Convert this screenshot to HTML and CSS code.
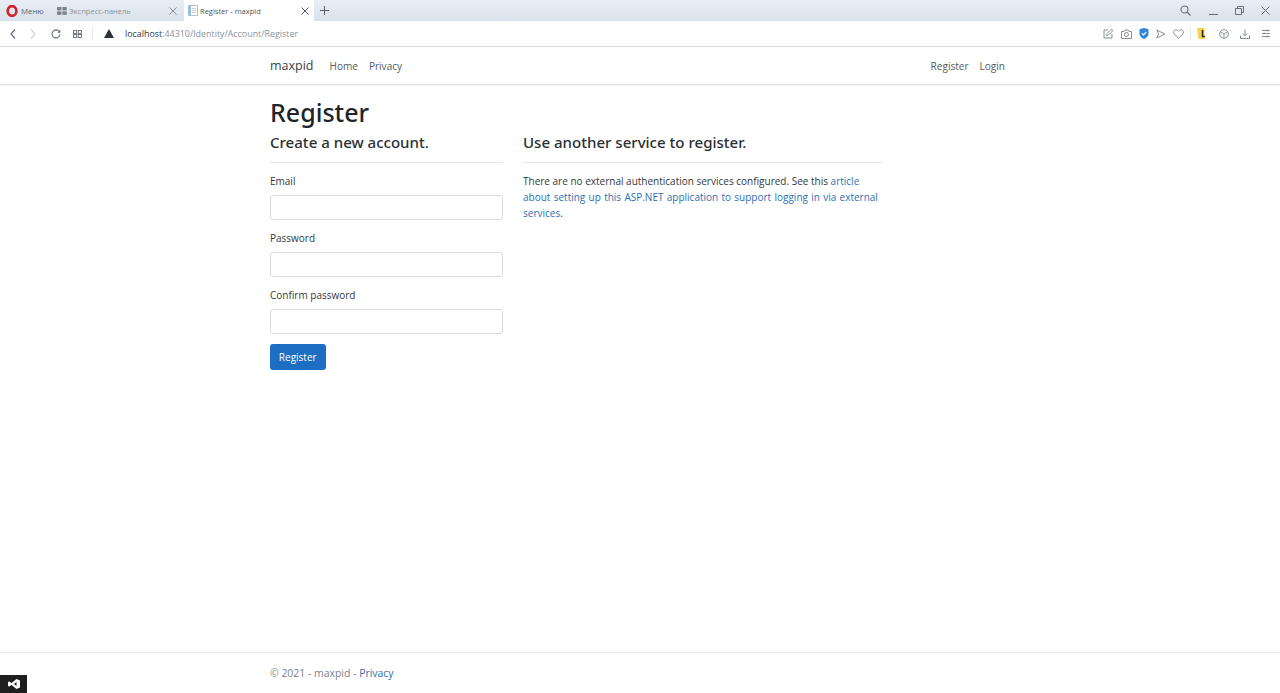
FILE: index.html
```html
<!DOCTYPE html>
<html lang="en">
<head>
<meta charset="utf-8">
<title>Register - maxpid</title>
<link rel="stylesheet" href="styles.css">
</head>
<body>
<div class="browser">
  <div class="tabbar">
    <div class="menu">
      <svg class="opera" viewBox="0 0 12 12" width="12" height="12"><ellipse cx="6" cy="6" rx="4.4" ry="4.9" fill="none" stroke="#d3202a" stroke-width="2.6"/></svg>
      <span>Меню</span>
    </div>
    <div class="tab tab-inactive">
      <svg class="tab-icon" viewBox="0 0 10 8" width="10" height="8"><g fill="#7a828a"><rect x="0" y="0" width="4.4" height="3.4"/><rect x="5.4" y="0" width="4.4" height="3.4"/><rect x="0" y="4.4" width="4.4" height="3.4"/><rect x="5.4" y="4.4" width="4.4" height="3.4"/></g></svg>
      <span class="tab-title">Экспресс-панель</span>
      <svg class="tab-x" viewBox="0 0 8 8" width="8" height="8"><path d="M.5.5l7 7M7.5.5l-7 7" stroke="#8a9098" stroke-width="1" fill="none"/></svg>
    </div>
    <div class="tab tab-active">
      <svg class="tab-icon" viewBox="0 0 10 11" width="10" height="11"><rect x=".5" y=".5" width="9" height="10" fill="#fff" stroke="#b4c0cc"/><rect x=".5" y=".5" width="2.5" height="10" fill="#8fbfe0"/><path d="M4 3.5h4M4 5.5h4M4 7.5h4" stroke="#c4ccd4" stroke-width="1"/></svg>
      <span class="tab-title">Register - maxpid</span>
      <svg class="tab-x" viewBox="0 0 8 8" width="8" height="8"><path d="M.5.5l7 7M7.5.5l-7 7" stroke="#555c64" stroke-width="1" fill="none"/></svg>
    </div>
    <svg class="plus" viewBox="0 0 9 9" width="9" height="9"><path d="M4.5 0v9M0 4.5h9" stroke="#555c64" stroke-width="1" fill="none"/></svg>
    <div class="window-controls">
      <svg class="wc-search" viewBox="0 0 11 11" width="11" height="11"><circle cx="4.5" cy="4.5" r="3.5" fill="none" stroke="#6a7078" stroke-width="1.1"/><path d="M7 7l3.5 3.5" stroke="#6a7078" stroke-width="1.3"/></svg>
      <svg class="wc-min" viewBox="0 0 9 9" width="9" height="9"><path d="M0 8.500h9" stroke="#6a7078" stroke-width="1.1"/></svg>
      <svg viewBox="0 0 9 9" width="9" height="9"><path d="M.5 2.500h6v6h-6zM2.500 2.500v-2h6v6h-2" fill="none" stroke="#6a7078"/></svg>
      <svg viewBox="0 0 9 9" width="9" height="9"><path d="M.5.5l8 8M8.500.5l-8 8" fill="none" stroke="#6a7078"/></svg>
    </div>
  </div>
  <div class="toolbar">
    <svg class="nav-back" viewBox="0 0 6 10" width="6" height="10"><path d="M5 .5L1 5l4 4.500" fill="none" stroke="#6a7078" stroke-width="1.200"/></svg>
    <svg class="nav-forward" viewBox="0 0 6 10" width="6" height="10"><path d="M1 .5L5 5 1 9.500" fill="none" stroke="#d0d3d6" stroke-width="1.200"/></svg>
    <svg class="nav-reload" viewBox="0 0 10 10" width="10" height="10"><path d="M8.600 3A4 4 0 1 0 9 5.500" fill="none" stroke="#6a7078" stroke-width="1.100"/><path d="M9.400.8v3H6.400z" fill="#6a7078"/></svg>
    <svg class="nav-grid" viewBox="0 0 9 8" width="9" height="8"><g fill="none" stroke="#6a7078" stroke-width=".9"><rect x=".5" y=".5" width="3.200" height="3"/><rect x="5.200" y=".5" width="3.200" height="3"/><rect x=".5" y="4.500" width="3.200" height="3"/><rect x="5.200" y="4.500" width="3.200" height="3"/></g></svg>
    <span class="divider"></span>
    <svg class="warn" viewBox="0 0 10 9" width="10" height="9"><path d="M5 0l5 9H0z" fill="#2e3238"/></svg>
    <span class="url"><span class="url-host">localhost</span>:44310/Identity/Account/Register</span>
    <div class="tool-icons">
      <svg viewBox="0 0 11 11" width="11" height="11"><path d="M9 6v4H1V2h4" fill="none" stroke="#878d93"/><path d="M3.500 7.500l.5-2L8.500 1l1.500 1.500L5.500 7z" fill="none" stroke="#878d93" stroke-width=".9"/></svg>
      <svg viewBox="0 0 11 10" width="11" height="10"><path d="M.5 2.500h2.500l1-1.500h3l1 1.500h2.500v7H.5z" fill="none" stroke="#878d93"/><circle cx="5.500" cy="5.500" r="2" fill="none" stroke="#878d93"/></svg>
      <svg viewBox="0 0 10 11" width="10" height="11"><path d="M5 0l4.500 1.200V6c0 2.500-2.500 4-4.500 5C3 10 .5 8.500.5 6V1.200z" fill="#2f86d6"/><path d="M2.800 5.300l1.700 1.700 2.800-3" fill="none" stroke="#fff" stroke-width="1.100"/></svg>
      <svg viewBox="0 0 10 10" width="10" height="10"><path d="M.8 1l8 4-8 4 1.700-4z" fill="none" stroke="#878d93"/></svg>
      <svg viewBox="0 0 11 10" width="11" height="10"><path d="M5.500 9.200L1.200 5C-.3 3 1 .8 3 .8c1.200 0 2 .7 2.500 1.500C6 1.500 6.800.8 8 .8c2 0 3.300 2.200 1.800 4.200z" fill="none" stroke="#878d93"/></svg>
      <span class="tool-sep"></span>
      <svg class="tool-yellow" viewBox="0 0 9 11" width="9" height="11"><path d="M0 0h7.500v11H1.500z" fill="#f7d24a"/><path d="M5.500 2v6.500H8" fill="none" stroke="#222" stroke-width="1.500"/></svg>
      <svg class="tool-first-wide" viewBox="0 0 10 10" width="10" height="10"><circle cx="5" cy="5" r="4.300" fill="none" stroke="#878d93"/><path d="M1.500 3L5 5l3.500-2M5 5v4.300" fill="none" stroke="#878d93" stroke-width=".9"/></svg>
      <svg class="tool-wide" viewBox="0 0 10 10" width="10" height="10"><path d="M.5 6.500v3h9v-3M5 .5v6M2.800 4.500L5 6.800l2.200-2.300" fill="none" stroke="#878d93"/></svg>
      <svg class="tool-wide" viewBox="0 0 10 9" width="10" height="9"><path d="M1 1.500h8M1 4.500h8M1 7.500h8M6.500.5v2M3 3.500v2M6 6.500v2" fill="none" stroke="#878d93"/></svg>
    </div>
  </div>
</div>

<header class="site-nav">
  <nav class="container nav-row">
    <a class="brand">maxpid</a>
    <a class="nav-link">Home</a>
    <a class="nav-link">Privacy</a>
    <a class="nav-link nav-push">Register</a>
    <a class="nav-link">Login</a>
  </nav>
</header>

<main class="container main">
  <h1>Register</h1>
  <div class="columns">
    <section class="col-form">
      <h4>Create a new account.</h4>
      <hr>
      <div class="field"><label>Email</label><input type="text" class="input"></div>
      <div class="field"><label>Password</label><input type="text" class="input"></div>
      <div class="field"><label>Confirm password</label><input type="text" class="input"></div>
      <button class="btn">Register</button>
    </section>
    <section class="col-ext">
      <h4>Use another service to register.</h4>
      <hr>
      <p>There are no external authentication services configured. See this <a>article about setting up this ASP.NET application to support logging in via external services</a>.</p>
    </section>
  </div>
</main>

<footer class="site-footer">
  <div class="container">© 2021 - maxpid - <a>Privacy</a></div>
</footer>

<div class="vs-badge">
  <svg viewBox="0 0 12 10" width="12" height="10"><path d="M8.500 0L12 1.500v7L8.500 10 3.500 6 1.300 7.600 0 7V3l1.300-.6L3.500 4zM8.500 3L6 5l2.500 2z" fill="#fff" fill-rule="evenodd"/></svg>
</div>
</body>
</html>
```
FILE: styles.css
```css
* { box-sizing: border-box; }
html, body { margin: 0; height: 693px; overflow: hidden; }
body {
  display: flex;
  flex-direction: column;
  background: #fff;
  color: #212529;
  font-family: "Open Sans", "Noto Sans", sans-serif;
  font-size: 10px;
  position: relative;
}
.browser { flex: none; }
.tabbar {
  height: 21px;
  display: flex;
  align-items: center;
  background: linear-gradient(#e9eef5, #d9e1ec);
  color: #555c64;
  font-size: 7.5px;
}
.menu { display: flex; align-items: center; gap: 3px; width: 56px; padding-left: 6px; font-size: 7.8px; }
.tab { height: 21px; display: flex; align-items: center; }
.tab-inactive { width: 128px; color: #8a929a; padding: 0 7px 0 1px; }
.tab-active { width: 130px; background: #fff; color: #50565c; padding: 0 5px 0 4px; }
.tab-inactive .tab-icon { margin-right: 2px; }
.tab-active .tab-icon { margin-right: 2px; }
.tab-title { flex: 1; white-space: nowrap; }
.plus { margin-left: 6px; }
.window-controls { margin-left: auto; display: flex; align-items: center; gap: 17px; padding-right: 10px; }
.wc-search { margin-right: 1px; }
.toolbar {
  height: 26px;
  display: flex;
  align-items: center;
  background: #fff;
  border-bottom: 1px solid #dcdfe3;
  padding-left: 10px;
  color: #8a929a;
}
.nav-forward { margin-left: 14px; }
.nav-reload { margin-left: 15px; }
.nav-grid { margin-left: 12px; }
.divider { width: 1px; height: 12px; background: #e4e6e9; margin-left: 10px; }
.warn { margin-left: 11px; }
.url { margin-left: 11px; font-size: 8.9px; white-space: nowrap; }
.url-host { color: #33383e; }
.tool-icons { margin-left: auto; display: flex; align-items: center; gap: 7px; padding-right: 9px; }
.tool-sep { width: 1px; height: 11px; background: #e4e6e9; margin: 0 -1px; }
.tool-first-wide { margin-left: 6px; }
.tool-wide { margin-left: 4px; }

.container { width: 770px; margin: 0 auto; padding: 0 15px; }
.site-nav {
  flex: none;
  height: 38px;
  border-bottom: 1px solid #dee2e6;
  box-shadow: 0 1px 3px rgba(0, 0, 0, .05);
}
.nav-row { height: 37px; display: flex; align-items: center; font-size: 10.05px; }
.brand { font-size: 12.5px; color: #3a3f44; margin-right: 16px; }
.nav-link { color: #565b60; margin-right: 11px; }
.nav-push { margin-left: auto; }
.nav-row .nav-link:last-child { margin-right: 5px; }

.main { flex: 1; width: 770px; }
h1 { margin: 10px 0 0; font-family: "Noto Sans", sans-serif; font-size: 25px; line-height: 34px; font-weight: 500; color: #212529; }
.columns { display: flex; }
.col-form { width: 233px; margin-right: 20px; }
.col-ext { width: 360px; }
h4 { margin: 4px 0 0; font-family: "Noto Sans", sans-serif; font-size: 15.05px; line-height: 19px; font-weight: 500; color: #2a2f34; white-space: nowrap; }
hr { border: 0; border-top: 1px solid #e6e8ea; margin: 9.5px 0 10.5px; }
.field { margin-bottom: 10.5px; }
label { display: block; line-height: 16px; margin-bottom: 5.5px; color: #33383d; }
.input { display: block; width: 100%; height: 25px; border: 1px solid #d8dce0; border-radius: 3px; background: #fff; }
.btn {
  display: block;
  width: 55.5px; height: 26px;
  margin-top: 10.5px;
  padding: 0;
  border: 0;
  border-radius: 3px;
  background: #1b6ec2;
  color: #fff;
  font: inherit;
  font-size: 10px;
}
p { margin: 0; line-height: 16px; color: #33383d; }
a { color: inherit; }
.col-ext a { color: #2f6fb2; word-spacing: .7px; }
.site-footer a { color: #2f6fb2; }
.site-footer { flex: none; height: 41px; border-top: 1px solid #e6e8ea; color: #7b8289; line-height: 40px; font-size: 10.45px; }
.vs-badge {
  position: absolute;
  left: 0; bottom: 0;
  width: 27px; height: 18px;
  background: #1e1e1e;
  display: flex;
  align-items: center;
  justify-content: center;
}
```
